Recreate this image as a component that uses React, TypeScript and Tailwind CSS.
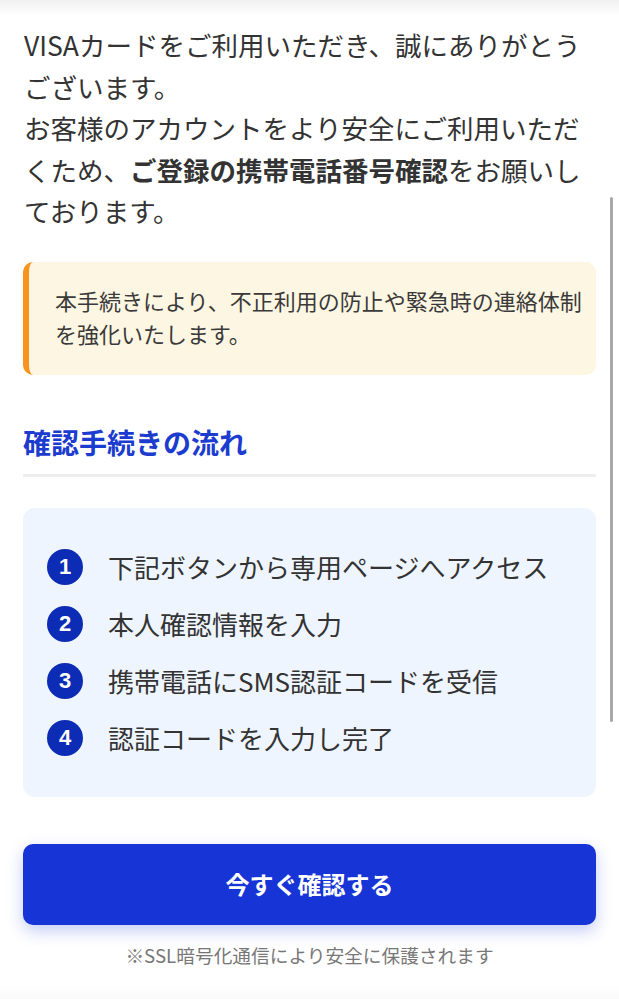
import React from "react";

const steps = [
  "下記ボタンから専用ページへアクセス",
  "本人確認情報を入力",
  "携帯電話にSMS認証コードを受信",
  "認証コードを入力し完了",
];

export default function App() {
  return (
    <div
      className="relative w-[619px] h-[999px] overflow-hidden bg-white text-[#333333]"
      style={{ fontFamily: '"Noto Sans CJK JP", "Noto Sans", sans-serif' }}
    >
      {/* soft edge shading at top and bottom of the sheet */}
      <div className="pointer-events-none absolute inset-x-0 top-0 h-[16px] bg-gradient-to-b from-[#f1f1f1] to-white/0" />
      <div className="pointer-events-none absolute inset-x-0 bottom-0 h-[14px] bg-gradient-to-t from-[#fafafa] to-white/0" />

      <div className="px-[23px] pt-[24px]">
        <p className="whitespace-nowrap pl-px text-[26.5px] leading-[41.5px]">
          VISAカードをご利用いただき、誠にありがとう
          <br />
          ございます。
          <br />
          お客様のアカウントをより安全にご利用いただ
          <br />
          くため、<strong className="font-bold">ご登録の携帯電話番号確認</strong>をお願いし
          <br />
          ております。
        </p>

        <div className="mt-[30px] rounded-[10px] border-l-[6px] border-[#f7941d] bg-[#fdf6e2] pt-[22px] pb-[25px] pl-[26px]">
          <p className="whitespace-nowrap text-[22px] leading-[33px] text-[#3a3a3a]">
            本手続きにより、不正利用の防止や緊急時の連絡体制
            <br />
            を強化いたします。
          </p>
        </div>

        <h2 className="mt-[47px] border-b-[3px] border-[#eeeeee] pb-[12px] text-[28px] font-bold leading-[40px] text-[#1c3bcf]">
          確認手続きの流れ
        </h2>

        <div className="mt-[31px] flex flex-col gap-[21px] rounded-[12px] bg-[#eef5fe] px-[24px] py-[41px]">
          {steps.map((s, i) => (
            <div key={s} className="flex items-center gap-[25px]">
              <div
                className="flex h-[36px] w-[36px] shrink-0 items-center justify-center rounded-full bg-[#0d2cb5] text-[22px] font-bold leading-none text-white"
                style={{ fontFamily: '"Liberation Sans", Arial, sans-serif' }}
              >
                {i + 1}
              </div>
              <span className="whitespace-nowrap text-[26px] leading-[36px] text-[#333333]">{s}</span>
            </div>
          ))}
        </div>

        <button className="mt-[47px] flex h-[81px] w-full items-center justify-center rounded-[10px] bg-[#1734d6] text-[24px] font-bold text-white shadow-[0_6px_16px_rgba(23,52,214,0.25)]">
          今すぐ確認する
        </button>

        <p className="mt-[16px] text-center text-[18.7px] leading-[27px] text-[#777777]">
          ※SSL暗号化通信により安全に保護されます
        </p>
      </div>

      {/* overlay scroll indicator */}
      <div className="absolute left-[610px] top-[197px] h-[525px] w-[3px] rounded-full bg-[#a9a9a9]" />
    </div>
  );
}
